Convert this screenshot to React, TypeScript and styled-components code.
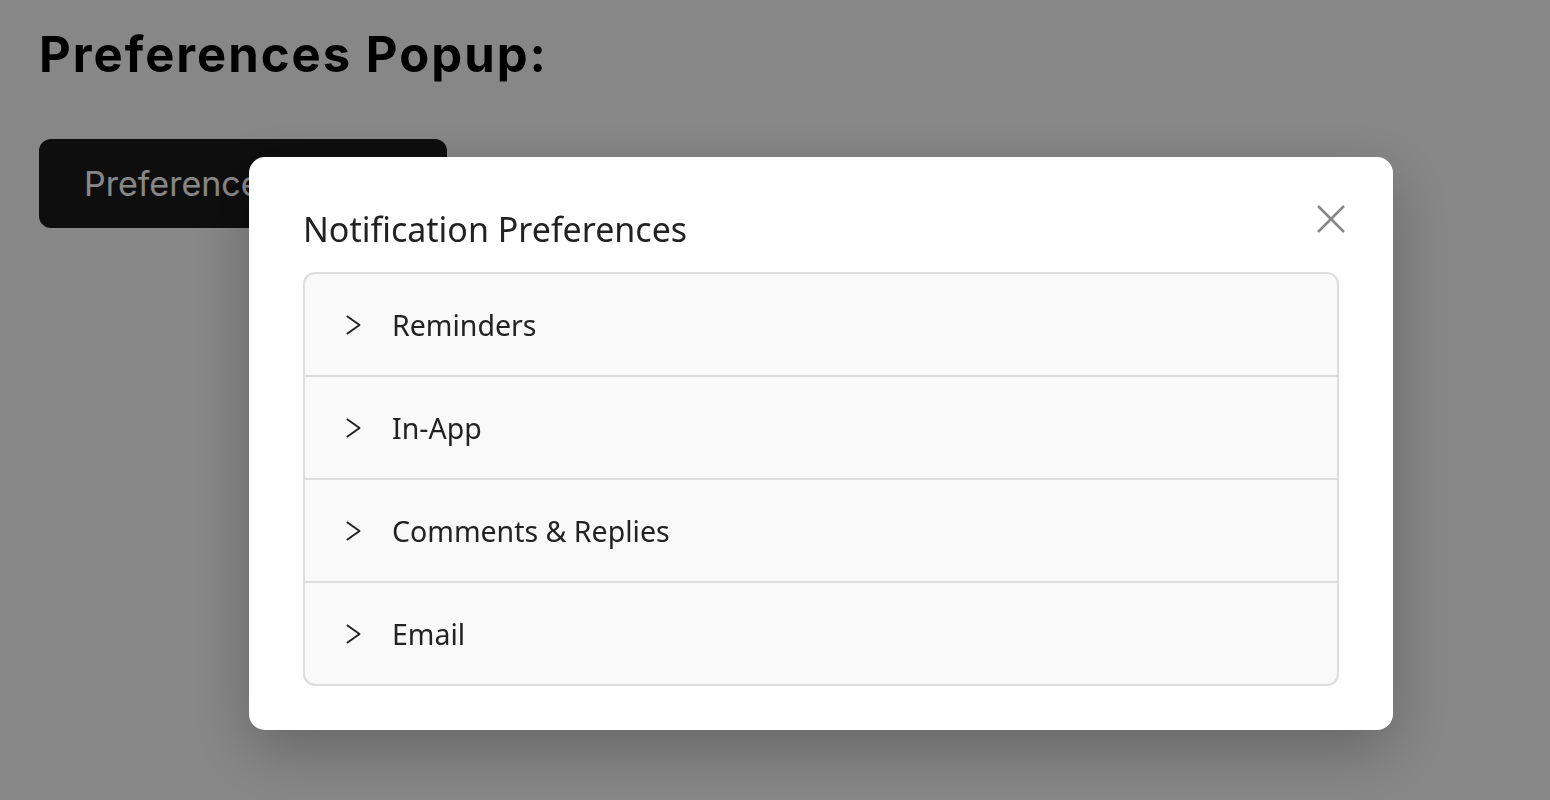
import React from 'react';
import styled, { createGlobalStyle } from 'styled-components';

const GlobalStyle = createGlobalStyle`
  html, body {
    margin: 0;
    padding: 0;
    background: #ffffff;
  }
  body {
    font-family: Inter, "Liberation Sans", sans-serif;
  }
`;

const Page = styled.div`
  padding: 26px 39px;
  min-height: 800px;
  box-sizing: border-box;
`;

const Heading = styled.h1`
  margin: 0 0 54px;
  font-family: Inter, "Liberation Sans", sans-serif;
  font-size: 49px;
  font-weight: 700;
  color: #000000;
  letter-spacing: 2px;
  line-height: 1.2;
`;

const OpenButton = styled.button`
  display: inline-flex;
  align-items: center;
  width: 408px;
  height: 89px;
  padding: 0 45px;
  border: none;
  border-radius: 12px;
  background: #1b1b1b;
  color: #ffffff;
  font-family: Inter, "Liberation Sans", sans-serif;
  font-size: 34px;
  font-weight: 400;
  white-space: nowrap;
  cursor: pointer;
`;

/* 오버레이 + 모달 */
const Overlay = styled.div`
  position: fixed;
  inset: 0;
  background: rgba(0, 0, 0, 0.47);
`;

const Modal = styled.div`
  position: fixed;
  left: 249px;
  top: 157px;
  width: 1144px;
  box-sizing: border-box;
  padding: 50px 54px 44px;
  background: #ffffff;
  border-radius: 16px;
  box-shadow: 0 20px 60px rgba(0, 0, 0, 0.25);
  font-family: "Segoe UI", "Noto Sans", "Open Sans", sans-serif;
`;

const Title = styled.h2`
  margin: 0 0 21px;
  font-size: 34px;
  font-weight: 400;
  color: #222222;
  line-height: 1.3;
`;

const CloseButton = styled.button`
  position: absolute;
  top: 46px;
  right: 46px;
  width: 32px;
  height: 32px;
  padding: 0;
  border: none;
  background: transparent;
  display: flex;
  align-items: center;
  justify-content: center;
  cursor: pointer;
`;

const Accordion = styled.div`
  border: 2px solid #dddddd;
  border-radius: 12px;
  background: #f9f9f9;
  overflow: hidden;
`;

const Row = styled.div<{ $last?: boolean }>`
  display: flex;
  align-items: center;
  gap: 31px;
  height: 101px;
  padding: 0 41px;
  border-bottom: ${(p) => (p.$last ? 'none' : '2px solid #dddddd')};
  cursor: pointer;
`;

const RowLabel = styled.span`
  font-size: 28.5px;
  color: #222222;
`;

const Chevron = () => (
  <svg width="15" height="20" viewBox="0 0 15 20" fill="none">
    <polyline
      points="1.5,1.5 13.5,10 1.5,18.5"
      stroke="#222222"
      strokeWidth="2"
      strokeLinecap="round"
      strokeLinejoin="round"
    />
  </svg>
);

const CloseIcon = () => (
  <svg width="28" height="28" viewBox="0 0 28 28" fill="none">
    <path d="M1 1 L27 27 M27 1 L1 27" stroke="#888888" strokeWidth="2.6" />
  </svg>
);

const items = ['Reminders', 'In-App', 'Comments & Replies', 'Email'];

const App = (): JSX.Element => (
  <>
    <GlobalStyle />
    <Page>
      <Heading>Preferences Popup:</Heading>
      <OpenButton type="button">Preferences Popup</OpenButton>
    </Page>
    <Overlay />
    <Modal>
      <CloseButton type="button" aria-label="Close">
        <CloseIcon />
      </CloseButton>
      <Title>Notification Preferences</Title>
      <Accordion>
        {items.map((label, i) => (
          <Row key={label} $last={i === items.length - 1}>
            <Chevron />
            <RowLabel>{label}</RowLabel>
          </Row>
        ))}
      </Accordion>
    </Modal>
  </>
);

export default App;
